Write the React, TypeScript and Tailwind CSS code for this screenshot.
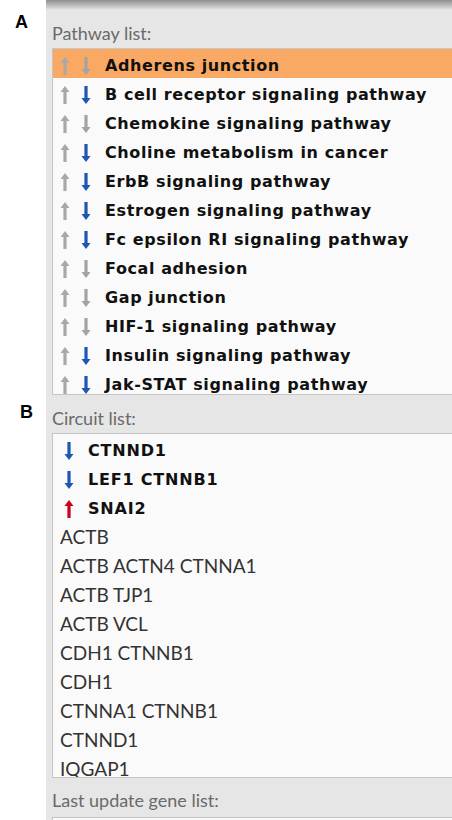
import React from "react"

type Dir = "gray" | "blue" | "red"

const pathways: { name: string; down: Dir; selected?: boolean }[] = [
  { name: "Adherens junction", down: "gray", selected: true },
  { name: "B cell receptor signaling pathway", down: "blue" },
  { name: "Chemokine signaling pathway", down: "gray" },
  { name: "Choline metabolism in cancer", down: "blue" },
  { name: "ErbB signaling pathway", down: "blue" },
  { name: "Estrogen signaling pathway", down: "blue" },
  { name: "Fc epsilon RI signaling pathway", down: "blue" },
  { name: "Focal adhesion", down: "gray" },
  { name: "Gap junction", down: "gray" },
  { name: "HIF-1 signaling pathway", down: "gray" },
  { name: "Insulin signaling pathway", down: "blue" },
  { name: "Jak-STAT signaling pathway", down: "blue" },
]

const circuitsMarked: { name: string; arrow: "up" | "down" }[] = [
  { name: "CTNND1", arrow: "down" },
  { name: "LEF1 CTNNB1", arrow: "down" },
  { name: "SNAI2", arrow: "up" },
]

const circuits = [
  "ACTB",
  "ACTB ACTN4 CTNNA1",
  "ACTB TJP1",
  "ACTB VCL",
  "CDH1 CTNNB1",
  "CDH1",
  "CTNNA1 CTNNB1",
  "CTNND1",
  "IQGAP1",
]

const colors: Record<Dir, string> = {
  gray: "#a3a3a3",
  blue: "#1d56b3",
  red: "#c8001a",
}

function Arrow({ up, color }: { up?: boolean; color: string }) {
  return (
    <svg width="10" height="18" viewBox="0 0 10 18" className="shrink-0">
      <path
        d="M5 0 L9.5 6 L6.6 6 L6.6 18 L3.4 18 L3.4 6 L0.5 6 Z"
        fill={color}
        transform={up ? undefined : "rotate(180 5 9)"}
      />
    </svg>
  )
}

const lato = { fontFamily: "Lato, 'Open Sans', sans-serif" }
const dejavu = { fontFamily: "'DejaVu Sans', Verdana, sans-serif" }

export default function App() {
  return (
    <div className="flex w-[452px] h-[820px] overflow-hidden bg-white">
      {/* Figure letters */}
      <div
        className="w-[46px] shrink-0 flex flex-col text-[18px] font-bold text-black"
        style={{ fontFamily: "'Liberation Sans', Arial, sans-serif" }}
      >
        <div className="pl-[15px] pt-[12px] leading-[20px]">A</div>
        <div className="pl-[20px] mt-[370px] leading-[20px]">B</div>
      </div>

      {/* Panel */}
      <div className="flex-1 flex flex-col bg-[#e6e6e6]">
        <div className="h-[10px] bg-gradient-to-b from-[#8f8f8f] to-[#e6e6e6]" />

        <div className="pl-[6px] h-[38px] flex items-end pb-[4px] text-[18px] leading-[22px] text-[#6a6a6a]" style={lato}>
          Pathway list:
        </div>
        <div className="ml-[6px] h-[347px] overflow-hidden border-t border-l border-b border-[#c6c6c6] bg-[#fafafa]">
          {pathways.map((p) => (
            <div
              key={p.name}
              className={`flex items-center h-[29px] pl-[7px] pt-[4px] ${p.selected ? "bg-[#f9a964]" : ""}`}
            >
              <Arrow up color="#a8a8a8" />
              <div className="w-[11px]" />
              <Arrow color={colors[p.down]} />
              <span
                className="ml-[14px] text-[16px] font-bold tracking-[0.6px] text-[#111] whitespace-nowrap"
                style={dejavu}
              >
                {p.name}
              </span>
            </div>
          ))}
        </div>

        <div className="pl-[6px] h-[38px] flex items-end pb-[4px] text-[18px] leading-[22px] text-[#6a6a6a]" style={lato}>
          Circuit list:
        </div>
        <div className="ml-[6px] h-[345px] overflow-hidden border-t border-l border-b border-[#c6c6c6] bg-[#fafafa]">
          {circuitsMarked.map((c) => (
            <div key={c.name} className="flex items-center h-[29px] pl-[11px] pt-[4px]">
              <Arrow up={c.arrow === "up"} color={c.arrow === "up" ? colors.red : colors.blue} />
              <span
                className="ml-[14px] text-[16px] font-bold tracking-[0.8px] text-[#111] whitespace-nowrap"
                style={dejavu}
              >
                {c.name}
              </span>
            </div>
          ))}
          {circuits.map((c, i) => (
            <div
              key={i}
              className="flex items-center h-[29px] pl-[7px] pt-[3px] text-[19px] text-[#333] whitespace-nowrap"
              style={lato}
            >
              {c}
            </div>
          ))}
        </div>

        <div className="pl-[6px] h-[39px] flex items-end pb-[6px] text-[18px] leading-[22px] text-[#6a6a6a]" style={lato}>
          Last update gene list:
        </div>
        <div className="ml-[6px] flex-1 border-t border-l border-[#c6c6c6] bg-[#fafafa]" />
      </div>
    </div>
  )
}
